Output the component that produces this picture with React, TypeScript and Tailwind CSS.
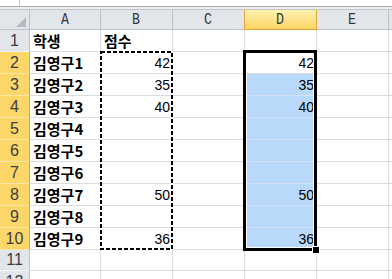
import React from "react";

type RowData = {
  n: number;
  a?: string;
  b?: string;
  d?: string;
  head?: boolean;
};

const rows: RowData[] = [
  { n: 1, a: "학생", b: "점수", head: true },
  { n: 2, a: "김영구1", b: "42", d: "42" },
  { n: 3, a: "김영구2", b: "35", d: "35" },
  { n: 4, a: "김영구3", b: "40", d: "40" },
  { n: 5, a: "김영구4" },
  { n: 6, a: "김영구5" },
  { n: 7, a: "김영구6" },
  { n: 8, a: "김영구7", b: "50", d: "50" },
  { n: 9, a: "김영구8" },
  { n: 10, a: "김영구9", b: "36", d: "36" },
  { n: 11 },
  { n: 12 },
];

const colHeads = ["A", "B", "C", "D", "E"];
const colWidth = ["w-[71px]", "w-[72px]", "w-[72px]", "w-[72px]", "w-[72px]"];

function ColHeader({ label, index }: { label: string; index: number }) {
  const active = label === "D";
  const beforeActive = label === "C";
  const cls = active
    ? "bg-linear-to-b from-[#fff2b0] to-[#fdd462] border-r-[#e2a33a] border-b-[#e2a33a]"
    : beforeActive
    ? "bg-[#e2e6eb] border-r-[#e2a33a] border-b-[#bfc3c9]"
    : "bg-[#e2e6eb] border-r-[#bfc3c9] border-b-[#bfc3c9]";
  return (
    <div className={`${colWidth[index]} shrink-0 flex items-center justify-center border-r border-b ${cls}`}>
      <span className="inline-block scale-x-[0.78] font-['Liberation_Mono',monospace] text-[17px] leading-none text-[#34383e]">
        {label}
      </span>
    </div>
  );
}

export default function App() {
  return (
    <div className="relative w-[392px] h-[279px] overflow-hidden bg-white font-['Noto_Sans_CJK_KR',sans-serif]">
      {/* formula bar edge */}
      <div className="flex h-[6px]">
        <div className="w-[20px] border-r border-[#c3c7cc]" />
        <div className="flex-1" />
      </div>
      <div className="h-px bg-[#a9adb3]" />
      <div className="h-[2px] bg-[#eceef1]" />
      <div className="h-px bg-[#bfc4ca]" />

      {/* column headers */}
      <div className="flex h-[20px]">
        <div className="relative w-[30px] shrink-0 border-r border-b border-[#bfc3c9] bg-[#e2e6eb]">
          <svg className="absolute right-[3px] bottom-[2px]" width="10" height="10" viewBox="0 0 10 10">
            <polygon points="10,0 10,10 0,10" fill="#b6bac0" />
          </svg>
        </div>
        {colHeads.map((c, i) => (
          <ColHeader key={c} label={c} index={i} />
        ))}
        <div className="flex-1 border-b border-[#bfc3c9] bg-[#e2e6eb]" />
      </div>

      {/* rows */}
      {rows.map((r) => {
        const sel = r.n >= 2 && r.n <= 10;
        const blue = r.n >= 3 && r.n <= 10;
        const h = r.n === 11 ? "h-[21px]" : "h-[22px]";
        return (
          <div key={r.n} className={`flex ${h}`}>
            <div
              className={`w-[30px] shrink-0 flex items-center justify-center border-r border-b font-['Liberation_Sans',sans-serif] text-[16px] leading-none text-[#3a3d42] ${
                sel
                  ? "bg-[#fdd66a] border-r-[#e2a33a] border-b-[#fbe6a6]"
                  : "bg-[#e2e6eb] border-r-[#bfc3c9] border-b-[#f3f4f6]"
              }`}
            >
              {r.n}
            </div>
            {/* A */}
            <div className="w-[71px] shrink-0 flex items-center pl-[3px] border-r border-b border-[#dadcdd] text-[15px] font-bold leading-none text-black">
              {r.a}
            </div>
            {/* B */}
            <div
              className={`w-[72px] shrink-0 flex items-center border-r border-b border-[#dadcdd] leading-none text-black ${
                r.head
                  ? "justify-start pl-[3px] text-[15px] font-bold"
                  : "justify-end pr-[2px] pt-px font-['Liberation_Sans',sans-serif] text-[14px]"
              }`}
            >
              {r.b}
            </div>
            {/* C */}
            <div className="w-[72px] shrink-0 border-r border-b border-[#dadcdd]" />
            {/* D */}
            <div
              className={`w-[72px] shrink-0 flex items-center justify-end pr-[2px] pt-px border-r border-b font-['Liberation_Sans',sans-serif] text-[14px] leading-none text-black ${
                blue ? "bg-[#b9d9fb] border-[#d2e2f2]" : "border-[#dadcdd]"
              }`}
            >
              {r.d}
            </div>
            {/* E */}
            <div className="w-[72px] shrink-0 border-r border-b border-[#dadcdd]" />
            <div className="flex-1 border-b border-[#dadcdd]" />
          </div>
        );
      })}

      {/* copy range (marching ants) around B2:B10 */}
      <svg className="absolute left-[100px] top-[51px]" width="73" height="199" viewBox="0 0 73 199">
        <rect x="1" y="1" width="71" height="197" fill="none" stroke="#ffffff" strokeWidth="2" />
        <rect x="1" y="1" width="71" height="197" fill="none" stroke="#000000" strokeWidth="2" strokeDasharray="4 2" />
      </svg>

      {/* selection D2:D10 */}
      <div className="absolute left-[243px] top-[50px] w-[74px] h-[201px] border-[3px] border-black shadow-[inset_0_0_0_1px_#ffffff]" />
      {/* fill handle */}
      <div className="absolute left-[312px] top-[246px] w-[8px] h-[8px] bg-black border border-white" />
    </div>
  );
}
